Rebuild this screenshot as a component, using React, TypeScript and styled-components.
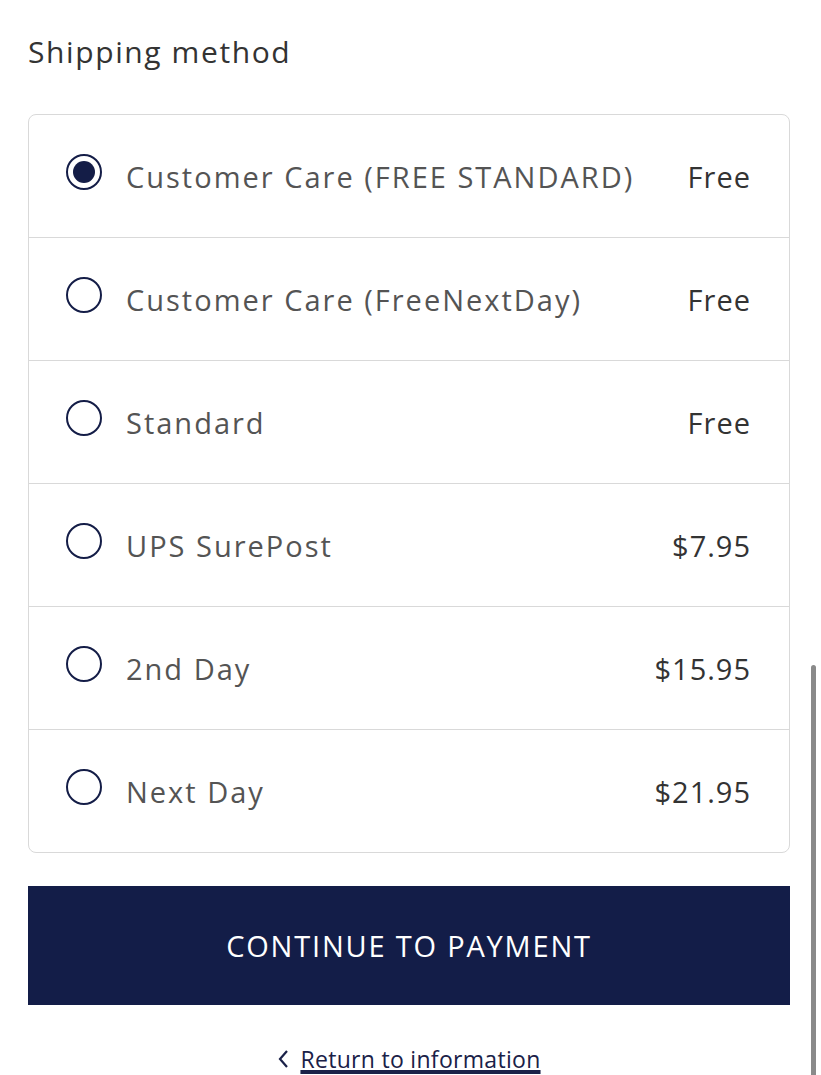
import * as React from "react";
import styled, { createGlobalStyle } from "styled-components";

type Method = {
  name: string;
  price: string;
};

const methods: Method[] = [
  { name: "Customer Care (FREE STANDARD)", price: "Free" },
  { name: "Customer Care (FreeNextDay)", price: "Free" },
  { name: "Standard", price: "Free" },
  { name: "UPS SurePost", price: "$7.95" },
  { name: "2nd Day", price: "$15.95" },
  { name: "Next Day", price: "$21.95" }
];

export default function App() {
  const [selected, setSelected] = React.useState(0);
  return (
    <Page>
      <GlobalStyle />
      <Heading>Shipping method</Heading>
      <MethodList>
        {methods.map((m, i) => (
          <MethodRow key={m.name} onClick={() => setSelected(i)}>
            <Radio $checked={selected === i} />
            <Label>{m.name}</Label>
            <Price>{m.price}</Price>
          </MethodRow>
        ))}
      </MethodList>
      <ContinueButton>CONTINUE TO PAYMENT</ContinueButton>
      <Footer>
        <BackLink href="#">
          <Chevron viewBox="0 0 12 20" aria-hidden="true">
            <path d="M10 2 L3 10 L10 18" />
          </Chevron>
          <span>Return to information</span>
        </BackLink>
      </Footer>
      <Scrollbar />
    </Page>
  );
}

const GlobalStyle = createGlobalStyle`
  html, body {
    margin: 0;
    background: #fff;
  }
  body {
    font-family: "Open Sans", "Liberation Sans", sans-serif;
    overflow: hidden;
  }
`;

const Page = styled.div`
  width: 762px;
  padding: 31px 31px 0 28px;
  height: 1075px;
  box-sizing: content-box;
`;

const Heading = styled.h2`
  margin: 0;
  font-size: 30px;
  line-height: 42px;
  font-weight: 500;
  letter-spacing: 1.6px;
  color: #333;
`;

const MethodList = styled.div`
  margin-top: 41px;
  border: 1px solid #d9d9d9;
  border-radius: 8px;
`;

const MethodRow = styled.label`
  display: flex;
  align-items: center;
  height: 122px;
  padding: 0 38px 0 37px;
  box-sizing: border-box;
  cursor: pointer;
  & + & {
    border-top: 1px solid #d9d9d9;
    height: 123px;
  }
`;

const Radio = styled.span<{ $checked: boolean }>`
  flex: none;
  width: 36px;
  height: 36px;
  border: 2px solid #141d47;
  border-radius: 50%;
  box-sizing: border-box;
  position: relative;
  margin-top: -8px;
  &::after {
    content: "";
    display: ${p => (p.$checked ? "block" : "none")};
    position: absolute;
    left: 5px;
    top: 5px;
    width: 22px;
    height: 22px;
    border-radius: 50%;
    background: #141d47;
  }
`;

const Label = styled.span`
  flex: 1;
  margin-left: 24px;
  font-size: 29px;
  color: #545454;
  letter-spacing: 2px;
`;

const Price = styled.span`
  font-size: 29px;
  font-weight: 500;
  color: #333;
  letter-spacing: 1px;
`;

const ContinueButton = styled.button`
  display: block;
  width: 100%;
  height: 119px;
  margin-top: 33px;
  border: none;
  background: #131d48;
  color: #fff;
  font-family: inherit;
  font-size: 29px;
  font-weight: 500;
  letter-spacing: 1.8px;
  cursor: pointer;
`;

const Footer = styled.div`
  display: flex;
  justify-content: center;
  margin-top: 38px;
`;

const BackLink = styled.a`
  display: inline-flex;
  align-items: center;
  gap: 11px;
  color: #1a2148;
  font-size: 23px;
  letter-spacing: 0.3px;
  span {
    text-decoration: underline;
    text-underline-offset: 4px;
  }
`;

const Chevron = styled.svg`
  width: 12px;
  height: 20px;
  fill: none;
  stroke: #1a2148;
  stroke-width: 2.2;
`;

const Scrollbar = styled.div`
  position: fixed;
  right: 5px;
  top: 665px;
  width: 5px;
  height: 420px;
  border-radius: 3px;
  background: #8a8a8a;
`;
